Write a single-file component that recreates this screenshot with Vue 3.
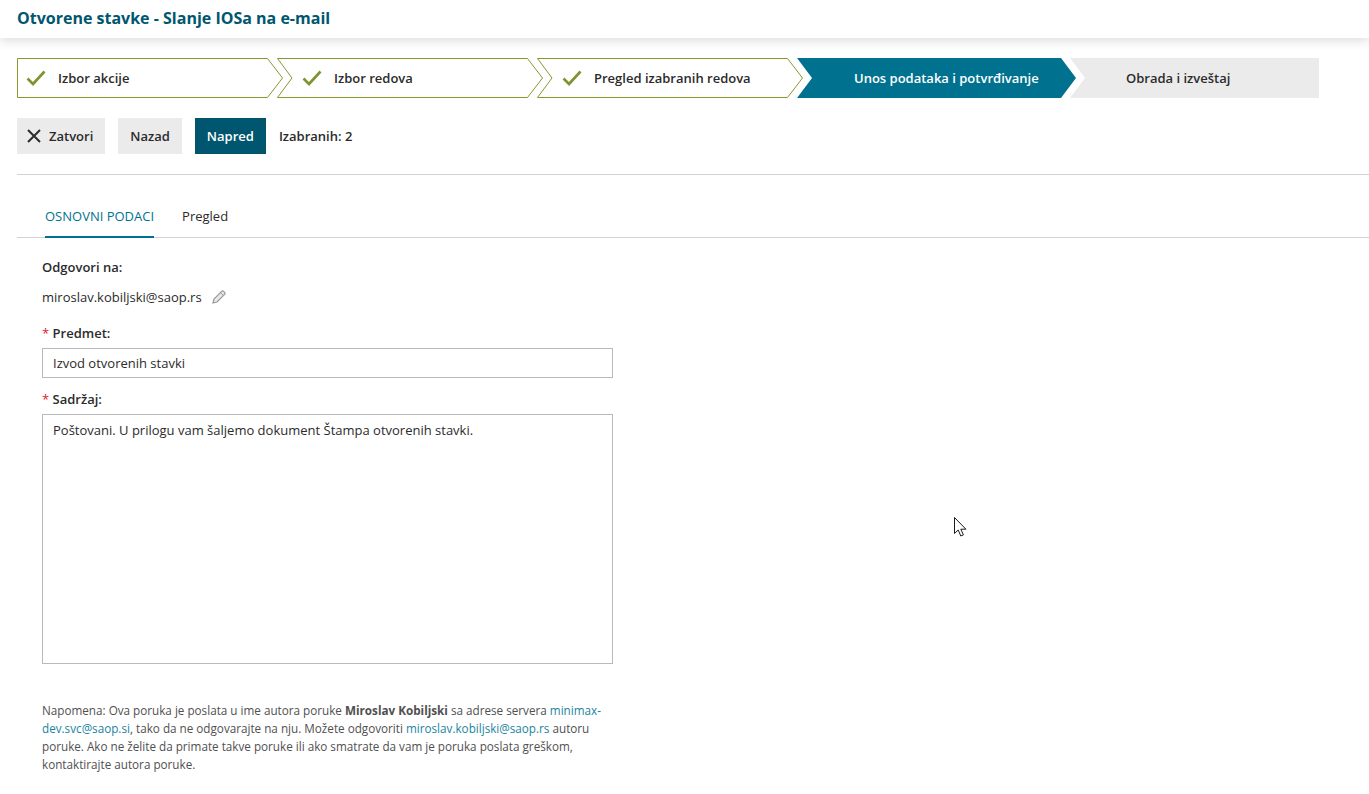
<script setup>
const steps = [
  { label: 'Izbor akcije', w: 266, pad: 9, done: true },
  { label: 'Izbor redova', w: 266, pad: 25, done: true },
  { label: 'Pregled izabranih redova', w: 266, pad: 25, done: true },
  { label: 'Unos podataka i potvrđivanje', w: 279, pad: 57, active: true },
  { label: 'Obrada i izveštaj', w: 249, pad: 56 }
]
function outline(s, i) {
  const r = s.w - 0.5
  const t = r - 15
  return i === 0
    ? `M0.5 0.5H${t}L${r} 20L${t} 39.5H0.5Z`
    : `M0.5 0.5H${t}L${r} 20L${t} 39.5H0.5L15 20Z`
}
</script>

<template>
  <div class="page">
    <header class="top"><h1>Otvorene stavke - Slanje IOSa na e-mail</h1></header>

    <main class="body">
      <ol class="steps">
        <li
          v-for="(s, i) in steps"
          :key="s.label"
          class="step"
          :class="{ active: s.active, todo: !s.active && !s.done }"
          :style="{ width: s.w + 'px', paddingLeft: s.pad + 'px' }"
        >
          <svg v-if="s.done" class="frame" :width="s.w" height="40" :viewBox="`0 0 ${s.w} 40`">
            <path :d="outline(s, i)" fill="#fff" stroke="#87982c" />
          </svg>
          <svg v-if="s.done" class="check" width="20" height="16" viewBox="0 0 20 16">
            <path d="M1.5 8.5L7 14L18.5 1.5" fill="none" stroke="#7d9431" stroke-width="2.6" />
          </svg>
          <span class="step-label">{{ s.label }}</span>
        </li>
      </ol>

      <div class="actions">
        <button class="btn close">
          <svg width="14" height="14" viewBox="0 0 14 14">
            <path d="M1 1L13 13M13 1L1 13" stroke="#2b2b2b" stroke-width="2" fill="none" />
          </svg>
          Zatvori
        </button>
        <button class="btn">Nazad</button>
        <button class="btn primary">Napred</button>
        <span class="count">Izabranih: 2</span>
      </div>

      <nav class="tabs">
        <a class="tab on">OSNOVNI PODACI</a>
        <a class="tab">Pregled</a>
      </nav>

      <form class="form" @submit.prevent>
        <div class="label first">Odgovori na:</div>
        <div class="email">
          miroslav.kobiljski@saop.rs
          <svg width="14" height="14" viewBox="0 0 14 14">
            <path d="M1 13L2 9L9.6 1.4C10.2 0.8 11 0.8 11.6 1.4L12.6 2.4C13.2 3 13.2 3.8 12.6 4.4L5 12Z" fill="#e8e8e8" stroke="#999" stroke-width="1.2" />
            <path d="M8.4 2.6L11.4 5.6" stroke="#999" stroke-width="1" fill="none" />
          </svg>
        </div>
        <label class="label req"><i>*</i> Predmet:</label>
        <div class="field">Izvod otvorenih stavki</div>
        <label class="label req second"><i>*</i> Sadržaj:</label>
        <div class="field area">Poštovani. U prilogu vam šaljemo dokument Štampa otvorenih stavki.</div>
        <p class="note">
          Napomena: Ova poruka je poslata u ime autora poruke <b>Miroslav Kobiljski</b> sa adrese servera
          <a>minimax-dev.svc@saop.si</a>, tako da ne odgovarajte na nju. Možete odgovoriti
          <a>miroslav.kobiljski@saop.rs</a> autoru poruke. Ako ne želite da primate takve poruke ili ako smatrate da vam je poruka poslata greškom, kontaktirajte autora poruke.
        </p>
      </form>
    </main>

    <svg class="cursor" width="13" height="20" viewBox="0 0 13 20">
      <path d="M0.5 0.5V16.5L4.2 13L6.8 19L9.4 17.9L6.8 12.2H11.9Z" fill="#fff" stroke="#1a1a1a" stroke-width="1" />
    </svg>
  </div>
</template>

<style scoped>
.page {
  position: relative;
  width: 1369px;
  height: 794px;
  overflow: hidden;
  background: #fff;
  font-family: "Open Sans", sans-serif;
  font-size: 13px;
  color: #2b2b2b;
}
.top {
  height: 38px;
  box-sizing: border-box;
  padding-left: 17px;
  padding-bottom: 3px;
  display: flex;
  align-items: center;
  box-shadow: 0 2px 12px rgba(0, 0, 0, 0.16);
}
h1 {
  margin: 0;
  font-size: 16px;
  font-weight: 700;
  color: #00566f;
}
.body {
  padding: 20px 0 0 17px;
}
.steps {
  list-style: none;
  margin: 0;
  padding: 0;
  display: flex;
}
.step {
  position: relative;
  box-sizing: border-box;
  height: 40px;
  margin-right: -6px;
  display: flex;
  align-items: center;
  font-weight: 600;
}
.frame {
  position: absolute;
  left: 0;
  top: 0;
}
.check {
  position: relative;
  margin-right: 12px;
}
.step-label {
  position: relative;
}
.step.active {
  background: #00728f;
  color: #fff;
  clip-path: polygon(0 0, 264px 0, 279px 50%, 264px 100%, 0 100%, 15px 50%);
}
.step.todo {
  background: #ebebeb;
  clip-path: polygon(0 0, 100% 0, 100% 100%, 0 100%, 15px 50%);
}
.actions {
  display: flex;
  align-items: center;
  margin-top: 20px;
  height: 36px;
}
.btn {
  height: 36px;
  border: 0;
  padding: 0 12px;
  margin-right: 13px;
  background: #ebebeb;
  color: #2b2b2b;
  font: 600 13px "Open Sans", sans-serif;
  display: flex;
  align-items: center;
}
.close {
  padding-left: 10px;
  gap: 8px;
}
.primary {
  background: #00566f;
  color: #fff;
}
.count {
  font-weight: 600;
}
.tabs {
  margin-top: 20px;
  border-top: 1px solid #d2d2d2;
  border-bottom: 1px solid #d2d2d2;
  height: 62px;
  padding-left: 28px;
  display: flex;
  gap: 28px;
  align-items: flex-end;
}
.tab {
  height: 44px;
  box-sizing: border-box;
  display: flex;
  align-items: center;
  margin-bottom: -1px;
  padding-top: 2px;
  border-bottom: 2px solid transparent;
}
.tab.on {
  color: #00728f;
  border-bottom-color: #00728f;
}
.form {
  padding-left: 25px;
  width: 571px;
}
.label {
  font-weight: 600;
  line-height: 18px;
}
.label.first {
  margin-top: 20px;
}
.req {
  display: block;
  margin-top: 18px;
  margin-bottom: 6px;
}
.req.second {
  margin-top: 12px;
}
.req i {
  color: #d8232a;
  font-style: normal;
  font-weight: 400;
}
.email {
  margin-top: 12px;
  line-height: 18px;
  display: flex;
  align-items: center;
  gap: 10px;
}
.field {
  box-sizing: border-box;
  height: 30px;
  border: 1px solid #b9b9b9;
  padding: 0 10px;
  line-height: 28px;
}
.field.area {
  height: 250px;
  padding-top: 1px;
}
.note {
  margin: 36.5px 0 0;
  font-size: 11.7px;
  line-height: 18px;
  color: #505050;
}
.note a {
  color: #1a84a0;
}
.cursor {
  position: absolute;
  left: 954px;
  top: 517px;
}
</style>
